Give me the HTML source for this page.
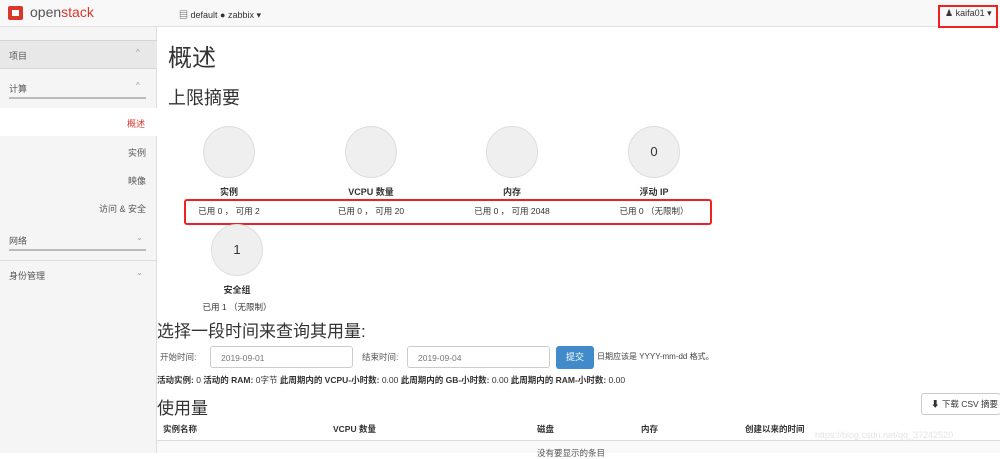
<!DOCTYPE html>
<html><head><meta charset="utf-8"><style>
*{margin:0;padding:0;box-sizing:border-box}
body{width:1000px;height:453px;overflow:hidden;background:#fff;font-family:"Liberation Sans","Noto Sans CJK SC",sans-serif;color:#333;position:relative;font-size:9px}
.a{position:absolute;white-space:nowrap}
.top{position:absolute;left:0;top:0;width:1000px;height:27px;background:#f8f8f8;border-bottom:1px solid #e0e0e0}
.side{position:absolute;left:0;top:27px;width:157px;height:426px;background:#f5f5f5;border-right:1px solid #ddd}
.circ{position:absolute;width:52px;height:52px;border-radius:50%;background:#efefef;border:1px solid #ddd;text-align:center;line-height:50px;font-size:13px;color:#333}
.lbl{position:absolute;font-weight:bold;font-size:9px;text-align:center;width:140px}
.sm{position:absolute;font-size:8.5px;text-align:center;width:140px}
.inp{position:absolute;height:22px;border:1px solid #ccc;border-radius:3px;background:#fff;font-size:8.5px;color:#777;padding:6px 0 0 10px}
</style></head><body>
<div class="top"></div>
<div class="a" style="left:8px;top:6px;width:15px;height:14px;background:#d9372c;border-radius:2px"></div>
<div class="a" style="left:12px;top:10px;width:7px;height:6px;background:#fff"></div>
<div class="a" style="left:30px;top:4px;font-size:14px;color:#555">open<span style="color:#d9372c">stack</span></div>
<div class="a" style="left:179px;top:8px;font-size:9px;color:#333">▤ default ● zabbix ▾</div>
<div class="a" style="left:938px;top:5px;width:60px;height:23px;border:2px solid #e22"></div>
<div class="a" style="left:945px;top:8px;font-size:9px">&#9823; kaifa01 ▾</div>

<div class="side"></div>
<div class="a" style="left:0;top:40px;width:157px;height:29px;background:#e8e8e8;border-top:1px solid #d5d5d5;border-bottom:1px solid #d5d5d5"></div>
<div class="a" style="left:9px;top:49px;font-size:9px;color:#555">项目</div>
<div class="a" style="left:136px;top:48px;font-size:8px;color:#999">^</div>
<div class="a" style="left:9px;top:82px;font-size:9px;color:#555">计算</div>
<div class="a" style="left:136px;top:81px;font-size:8px;color:#999">^</div>
<div class="a" style="left:9px;top:97px;width:137px;height:2px;background:#bbb"></div>
<div class="a" style="left:0;top:108px;width:157px;height:28px;background:#fff"></div>
<div class="a" style="left:127px;top:117px;font-size:9px;color:#d9372c">概述</div>
<div class="a" style="right:854px;top:146px;font-size:9px;color:#555">实例</div>
<div class="a" style="right:854px;top:174px;font-size:9px;color:#555">映像</div>
<div class="a" style="right:854px;top:202px;font-size:9px;color:#555">访问 &amp; 安全</div>
<div class="a" style="left:9px;top:234px;font-size:9px;color:#555">网络</div>
<div class="a" style="left:136px;top:233px;font-size:8px;color:#999">⌄</div>
<div class="a" style="left:9px;top:249px;width:137px;height:2px;background:#bbb"></div>
<div class="a" style="left:0;top:260px;width:157px;height:1px;background:#ddd"></div>
<div class="a" style="left:9px;top:269px;font-size:9px;color:#555">身份管理</div>
<div class="a" style="left:136px;top:268px;font-size:8px;color:#999">⌄</div>

<div class="a" style="left:168px;top:38px;font-size:24px;color:#333">概述</div>
<div class="a" style="left:168px;top:84px;font-size:18px;color:#333">上限摘要</div>

<div class="circ" style="left:203px;top:126px"></div>
<div class="circ" style="left:345px;top:126px"></div>
<div class="circ" style="left:486px;top:126px"></div>
<div class="circ" style="left:628px;top:126px">0</div>
<div class="lbl" style="left:159px;top:185px">实例</div>
<div class="lbl" style="left:301px;top:185px">VCPU 数量</div>
<div class="lbl" style="left:442px;top:185px">内存</div>
<div class="lbl" style="left:584px;top:185px">浮动 IP</div>
<div class="sm" style="left:159px;top:205px">已用 0 ， 可用 2</div>
<div class="sm" style="left:301px;top:205px">已用 0 ， 可用 20</div>
<div class="sm" style="left:442px;top:205px">已用 0 ， 可用 2048</div>
<div class="sm" style="left:584px;top:205px">已用 0 （无限制）</div>
<div class="a" style="left:184px;top:199px;width:528px;height:26px;border:2px solid #e22;border-radius:3px"></div>
<div class="circ" style="left:211px;top:224px">1</div>
<div class="lbl" style="left:167px;top:283px">安全组</div>
<div class="sm" style="left:167px;top:301px">已用 1 （无限制）</div>

<div class="a" style="left:157px;top:317px;font-size:17px;color:#333">选择一段时间来查询其用量:</div>
<div class="a" style="left:160px;top:351px;font-size:8.5px;color:#555">开始时间:</div>
<div class="inp" style="left:210px;top:346px;width:143px">2019-09-01</div>
<div class="a" style="left:362px;top:351px;font-size:8.5px;color:#555">结束时间:</div>
<div class="inp" style="left:407px;top:346px;width:143px">2019-09-04</div>
<div class="a" style="left:556px;top:346px;width:38px;height:23px;background:#428bca;border-radius:3px;color:#fff;font-size:9px;text-align:center;line-height:23px">提交</div>
<div class="a" style="left:597px;top:351px;font-size:8px;color:#444">日期应该是 YYYY-mm-dd 格式。</div>
<div class="a" style="left:157px;top:374px;font-size:8.5px;color:#333"><b>活动实例:</b> 0 <b>活动的 RAM:</b> 0字节 <b>此周期内的 VCPU-小时数:</b> 0.00 <b>此周期内的 GB-小时数:</b> 0.00 <b>此周期内的 RAM-小时数:</b> 0.00</div>
<div class="a" style="left:157px;top:394px;font-size:17px;color:#333">使用量</div>
<div class="a" style="left:921px;top:393px;width:80px;height:22px;border:1px solid #ccc;border-radius:3px;background:#fff;font-size:8.5px;line-height:20px;padding-left:9px">⬇ 下载 CSV 摘要</div>
<div class="a" style="left:163px;top:423px;font-size:8.5px;font-weight:bold">实例名称</div>
<div class="a" style="left:333px;top:423px;font-size:8.5px;font-weight:bold">VCPU 数量</div>
<div class="a" style="left:537px;top:423px;font-size:8.5px;font-weight:bold">磁盘</div>
<div class="a" style="left:641px;top:423px;font-size:8.5px;font-weight:bold">内存</div>
<div class="a" style="left:745px;top:423px;font-size:8.5px;font-weight:bold">创建以来的时间</div>
<div class="a" style="left:157px;top:440px;width:843px;height:1px;background:#ddd"></div>
<div class="a" style="left:157px;top:441px;width:843px;height:12px;background:#f9f9f9"></div>
<div class="a" style="left:815px;top:430px;font-size:9px;color:#e4e4e4">https://blog.csdn.net/qq_37242520</div>
<div class="a" style="left:537px;top:447px;font-size:8.5px;color:#555">没有要显示的条目</div>
</body></html>
